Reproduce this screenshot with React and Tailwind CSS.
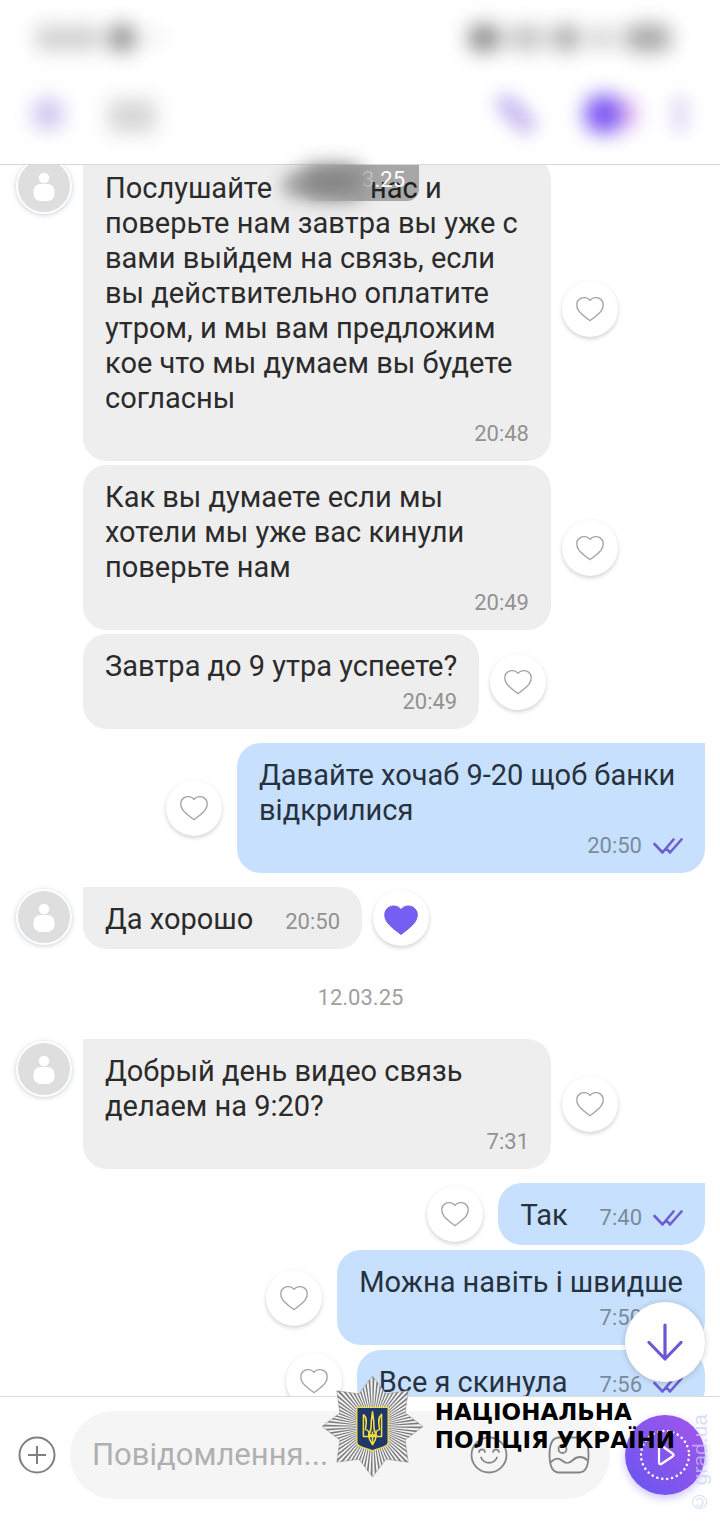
import clsx from 'clsx'

const messages = [
  { id: 1, time: '20:48', avatar: true, hidden: true },
  { id: 2, text: 'Как вы думаете если мы хотели мы уже вас кинули поверьте нам', time: '20:49' },
  { id: 3, text: 'Завтра до 9 утра успеете?', time: '20:49' },
  { id: 4, text: 'Давайте хочаб 9-20 щоб банки відкрилися', time: '20:50', mine: true, first: true },
  { id: 5, text: 'Да хорошо', time: '20:50', avatar: true, inline: true, liked: true },
  { id: 6, date: '12.03.25' },
  { id: 7, text: 'Добрый день видео связь делаем на 9:20?', time: '7:31', avatar: true },
  { id: 8, text: 'Так', time: '7:40', mine: true, inline: true, first: true },
  { id: 9, text: 'Можна навіть і швидше', time: '7:50', mine: true },
  { id: 10, text: 'Все я скинула', time: '7:56', mine: true, inline: true },
]

function Heart({ liked }) {
  return (
    <button
      type="button"
      aria-label="Like"
      className="flex h-14 w-14 shrink-0 items-center justify-center rounded-full bg-white shadow-[0_2px_4px_rgba(0,0,0,0.18)]"
    >
      <svg
        viewBox="0 0 36 32"
        className={liked ? 'mt-1 h-8 w-9' : 'h-[26px] w-[30px]'}
        fill={liked ? '#7360f2' : 'none'}
        stroke={liked ? '#6650e0' : '#a3a3a3'}
        strokeWidth={liked ? 0.8 : 1.6}
        strokeLinejoin="round"
      >
        <path d="M18 30.500C13.500 27 7 22.500 4 18C0.500 12.500 1 6.500 5.500 3.500C9.500 1 15 1.500 18 5.500C21 1.500 26.500 1 30.500 3.500C35 6.500 35.500 12.500 32 18C29 22.500 22.500 27 18 30.500Z" />
      </svg>
    </button>
  )
}

function Avatar() {
  return (
    <div className="mt-[2px] h-14 w-14 shrink-0 self-start rounded-full border-2 border-white bg-[#dedede] shadow-[0_1px_5px_rgba(90,120,150,0.35)]">
      <svg viewBox="0 0 52 52" fill="white">
        <circle cx="26" cy="18" r="5.300" />
        <rect x="15.500" y="24" width="21" height="17" rx="7" />
      </svg>
    </div>
  )
}

function Time({ time, mine }) {
  return (
    <span
      className={clsx(
        'flex shrink-0 items-center justify-end gap-[11px] text-[22px] leading-[35px]',
        mine ? 'text-[#7b8b9c]' : 'text-[#929292]',
      )}
    >
      {time}
      {mine && (
        <svg viewBox="0 0 30 18" className="h-[18px] w-[30px]" fill="none" stroke="#705cd3" strokeWidth="2.600" strokeLinecap="round" strokeLinejoin="round">
          <path d="M1.500 7L9.500 15.500L20.500 2.500M13.500 11.500L17 15.500L28.500 2.500" />
        </svg>
      )}
    </span>
  )
}

function Message({ item }) {
  const { text, time, mine, avatar, inline, liked, hidden, first } = item
  return (
    <div className={clsx('flex items-center', mine ? 'flex-row-reverse gap-[15px]' : 'gap-[11px]')}>
      {!mine && <div className="flex w-14 shrink-0 self-stretch">{avatar && <Avatar />}</div>}
      <div
        className={clsx(
          'max-w-[468px] rounded-3xl px-[22px] pt-[15px] pb-[10px]',
          mine ? 'bg-[#c7e0fd] text-[#26323f]' : 'bg-[#eeeeee] text-[#2b2b2b]',
          inline && 'flex items-baseline gap-8',
          avatar && 'rounded-tl-none',
          first && 'rounded-tr-none',
        )}
      >
        {hidden ? (
          <p>
            Послушайте
            <span className="inline-block w-[98px]"></span>
            нас и поверьте нам завтра вы уже с вами выйдем на связь, если вы действительно оплатите утром, и мы вам
            предложим кое что мы думаем вы будете согласны
          </p>
        ) : (
          <p>{text}</p>
        )}
        <Time time={time} mine={mine} />
      </div>
      <Heart liked={liked} />
    </div>
  )
}

// Redacted status bar and contact row
function Header() {
  return (
    <header className="h-[165px] shrink-0 border-b border-[#d8d8d8] bg-white px-8 pt-6">
      <div className="flex h-7 items-center justify-between">
        <div className="ml-1 flex items-center gap-2 blur-[10px]">
          <div className="h-6 w-16 bg-[#cfcfcf]"></div>
          <div className="h-7 w-7 rounded-full bg-[#8c8c8c]"></div>
          <div className="h-3 w-5 bg-[#ededed]"></div>
        </div>
        <div className="mr-4 flex items-center gap-2 blur-[10px]">
          <div className="h-7 w-8 rounded-full bg-[#888888]"></div>
          <div className="h-6 w-9 bg-[#c4c4c4]"></div>
          <div className="h-7 w-7 rounded-full bg-[#a8a8a8]"></div>
          <div className="h-5 w-7 bg-[#d2d2d2]"></div>
          <div className="h-7 w-12 rounded-full bg-[#a8a8a8]"></div>
        </div>
      </div>
      <div className="mt-10 flex h-11 items-center justify-between">
        <div className="flex items-center gap-14">
          <div className="h-8 w-8 rounded-full bg-[#cdc2f0] blur-[10px]"></div>
          <div className="-ml-3 mt-1 h-8 w-12 bg-[#d6d6d6] blur-[10px]"></div>
        </div>
        <div className="flex items-center">
          <div className="mr-11 h-5 w-12 rotate-45 rounded-full bg-[#c6b6f0] blur-[9px]"></div>
          <div className="mr-9 flex items-center blur-[10px]">
            <div className="h-10 w-10 rounded-full bg-[#7b56f2]"></div>
            <div className="-ml-1 h-7 w-4 bg-[#d9a8ee]"></div>
          </div>
          <div className="h-9 w-4 bg-[#e3d9f6] blur-[9px]"></div>
        </div>
      </div>
    </header>
  )
}

const starPoints = Array.from({ length: 16 }, (_, i) => {
  const r = i % 2 ? 35 : 50
  const a = (i * Math.PI) / 8
  return `${50 + r * Math.sin(a)},${50 - r * Math.cos(a)}`
}).join(' ')

// Thin wedges that widen from the centre, so the grooves stay even
const wedges = Array.from({ length: 72 }, (_, i) => {
  const a = (i * Math.PI) / 36
  const b = a + Math.PI / 80
  return `M50 50L${50 + 55 * Math.sin(a)} ${50 - 55 * Math.cos(a)}L${50 + 55 * Math.sin(b)} ${50 - 55 * Math.cos(b)}Z`
}).join('')

function PoliceStar() {
  return (
    <svg viewBox="0 0 100 100" className="h-[101px] w-[101px] shrink-0">
      <defs>
        <clipPath id="star">
          <polygon points={starPoints} />
        </clipPath>
      </defs>
      <polygon points={starPoints} fill="#f2f2f2" stroke="#a0a0a0" strokeWidth="0.600" />
      <path d={wedges} clipPath="url(#star)" fill="#7a7a7a" />
      <path d="M34.500 31H65.500V66C65.500 70 59 70.500 50 74C41 70.500 34.500 70 34.500 66Z" fill="#1d3768" stroke="#f1dc45" strokeWidth="1.300" />
      <g fill="none" stroke="#f5df3f" strokeWidth="1.500" strokeLinejoin="round">
        <path d="M50 35L48.800 45C48.500 52 49 55 46 57.500M50 35L51.200 45C51.500 52 51 55 54 57.500" />
        <path d="M41 38V60H46.500C47 64 48.500 65 50 68C51.500 65 53 64 53.500 60H59V38C54.500 42 56.500 48 57 53C54 53.500 52.500 56 53.500 60M41 38C45.500 42 43.500 48 43 53C46 53.500 47.500 56 46.500 60" />
        <path d="M46.500 60H53.500M50 55V68M46 60C46.500 56 49 58 50 61C51 58 53.500 56 54 60" />
      </g>
    </svg>
  )
}

function Composer() {
  return (
    <footer className="relative flex h-32 shrink-0 items-center border-t border-[#dcdcdc] bg-white pb-3 pl-[18px] pr-[15px]">
      <button type="button" aria-label="Додати" className="shrink-0">
        <svg viewBox="0 0 38 38" className="h-[38px] w-[38px]" fill="none" stroke="#808080" strokeWidth="2">
          <circle cx="19" cy="19" r="17.500" />
          <path d="M10 19H28M19 10V28" />
        </svg>
      </button>
      <div className="ml-[14px] flex h-[88px] min-w-0 flex-1 items-center gap-10 rounded-full bg-[#f5f5f5] pl-[22px] pr-5">
        <input
          type="text"
          aria-label="Повідомлення"
          placeholder="Повідомлення..."
          className="min-w-0 flex-1 bg-transparent text-[31px] outline-none placeholder:text-[#b0b0b0]"
        />
        <button type="button" aria-label="Емодзі" className="shrink-0">
          <svg viewBox="0 0 38 38" className="h-[38px] w-[38px]" fill="none" stroke="#858585" strokeWidth="1.800" strokeLinecap="round">
            <circle cx="19" cy="19" r="17.500" />
            <path d="M9 16C10 12.500 14 12.500 15 16M23 16C24 12.500 28 12.500 29 16M11 21.500C14 28.500 24 28.500 27 21.500" />
          </svg>
        </button>
        <button type="button" aria-label="Стікери" className="shrink-0">
          <svg viewBox="0 0 42 38" className="h-[38px] w-[42px]" fill="none" stroke="#858585" strokeWidth="1.800" strokeLinecap="round">
            <path d="M11 1.500H31C37 1.500 40.500 7 40.500 19S37 36.500 31 36.500H11C5 36.500 1.500 31 1.500 19S5 1.500 11 1.500Z" />
            <circle cx="14.500" cy="13" r="4" />
            <path d="M3 26C7 22 11 22 14 24.500C18 28 21 28 25 24C29 20 35 20 39 24" />
          </svg>
        </button>
      </div>
      <div className="relative ml-[15px] shrink-0">
        <button type="button" aria-label="Відео" className="block h-20 w-20 rounded-full bg-linear-to-tr from-[#6654f0] to-[#a455ea] shadow-[0_3px_8px_rgba(110,80,240,0.35)]">
          <svg viewBox="0 0 80 80" fill="none" stroke="white">
            <circle cx="40" cy="40" r="24" strokeWidth="2.500" strokeDasharray="0.100 4.926" strokeLinecap="round" />
            <path d="M34 32V47.500C34 49.500 35.500 49.500 37 48.500L47.500 41.500C49 40.500 49 39.500 47.500 38.500L37 31C35.500 30 34 30 34 32Z" strokeWidth="2.200" />
          </svg>
        </button>
        <button type="button" aria-label="Вниз" className="absolute bottom-[113px] left-0 flex h-20 w-20 items-center justify-center rounded-full bg-white shadow-[0_1px_6px_rgba(0,0,0,0.2)]">
          <svg viewBox="0 0 36 38" className="h-[38px] w-9" fill="none" stroke="#6f57d2" strokeWidth="3.200" strokeLinecap="round" strokeLinejoin="round">
            <path d="M18 2V36M2 19.500L18 36L34 19.500" />
          </svg>
        </button>
      </div>

      {/* Police watermark */}
      <div className="pointer-events-none absolute bottom-[47px] right-[45px] flex items-center gap-3">
        <PoliceStar />
        <p className="pb-[2px] font-['DejaVu_Sans'] text-[23px] font-bold leading-7 text-black">
          НАЦІОНАЛЬНА
          <br />
          ПОЛІЦІЯ УКРАЇНИ
        </p>
      </div>
      <p className="pointer-events-none absolute bottom-[10px] right-[8px] rotate-180 font-['Liberation_Sans'] text-[21px] leading-6 text-[#c4d0f4]/70 [writing-mode:vertical-rl]">
        © grad.ua
      </p>
    </footer>
  )
}

export default function App() {
  return (
    <div className="flex h-screen flex-col overflow-hidden bg-white font-[Roboto,sans-serif] text-[29px] leading-[35px]">
      <Header />
      <main className="relative min-h-0 flex-1">
        <div className="h-full overflow-hidden pl-4 pr-[15px]">
          <div className="-mt-[9px] flex flex-col gap-1">
            {messages.map((item) =>
              item.date ? (
                <p key={item.id} className="mb-6 mt-8 text-center text-[22px] leading-[26px] text-[#a0a0a0]">
                  {item.date}
                </p>
              ) : (
                <div
                  key={item.id}
                  className={clsx(item.first || item.liked ? 'mt-[10px]' : item.mine && 'mt-px')}
                >
                  <Message item={item} />
                </div>
              ),
            )}
          </div>
        </div>
        {/* Sticky date, partly smudged */}
        <div className="absolute left-[300px] top-0 flex h-9 w-[119px] justify-end rounded-b-xl bg-linear-to-r from-transparent via-black/30 to-black/30 pr-[14px] text-[22px] leading-[30px] text-white">
          <span className="opacity-40">3</span>.25
        </div>
        <div className="absolute left-[282px] top-2 h-6 w-20 rounded-full bg-[#a8a8a8] blur-[8px]"></div>
        <div className="absolute left-[300px] top-0 h-8 w-16 rounded-full bg-[#858585] blur-[10px]"></div>
      </main>
      <Composer />
    </div>
  )
}
